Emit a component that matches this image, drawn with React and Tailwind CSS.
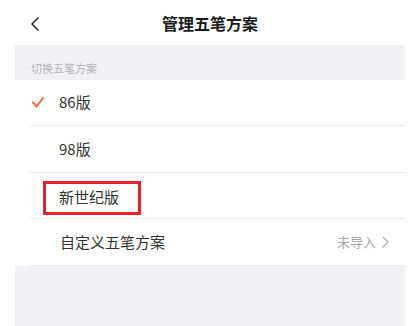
const font = { fontFamily: '"Noto Sans CJK SC", "Noto Sans", sans-serif' }

function Check () {
  return (
    <svg width="12" height="11" viewBox="0 0 12 11" fill="none" className="shrink-0">
      <path d="M1 5.5 L4.5 9.5 L11 1" stroke="#f2683c" strokeWidth="2" strokeLinecap="round" strokeLinejoin="round" />
    </svg>
  )
}

function Back () {
  return (
    <svg width="9" height="14" viewBox="0 0 9 14" fill="none">
      <path d="M8 1 L2 7 L8 13" stroke="#222" strokeWidth="1.5" strokeLinecap="round" strokeLinejoin="round" />
    </svg>
  )
}

function Chevron () {
  return (
    <svg width="7" height="12" viewBox="0 0 7 12" fill="none">
      <path d="M1 1 L6 6 L1 11" stroke="#b0b0b0" strokeWidth="1.2" strokeLinecap="round" strokeLinejoin="round" />
    </svg>
  )
}

export default function App () {
  return (
    <div className="w-[420px] h-[326px] bg-white overflow-hidden" style={font}>
      <div className="mx-[15px] flex flex-col h-full">
        {/* header */}
        <div className="relative h-[45px] flex items-center justify-center shrink-0">
          <div className="absolute left-[15px] top-[17px]"><Back /></div>
          <span className="text-[16px] font-bold text-[#1a1a1a]">管理五笔方案</span>
        </div>

        {/* section label */}
        <div className="h-[35px] bg-[#f1f1f5] flex items-end pb-[6px] pl-[16px] shrink-0">
          <span className="text-[11px] text-[#b3b3b8] leading-none">切换五笔方案</span>
        </div>

        {/* list */}
        <div className="bg-white pl-[15px] shrink-0">
          <div className="h-[46px] border-b border-[#ececec] flex items-center">
            <span className="ml-[2px] flex"><Check /></span>
            <span className="ml-[15px] text-[15px] text-[#333]">86版</span>
          </div>
          <div className="h-[47px] border-b border-[#ececec] flex items-center">
            <span className="ml-[29px] text-[15px] text-[#333]">98版</span>
          </div>
          <div className="h-[46px] border-b border-[#ececec] flex items-center">
            <span className="ml-[13px] mt-[4px] h-[34px] w-[98px] border-[3px] border-[#e8212b] flex items-center pl-[13px]">
              <span className="text-[15px] text-[#333]">新世纪版</span>
            </span>
          </div>
          <div className="h-[47px] border-b border-[#ececec] flex items-center pr-[16px]">
            <span className="ml-[30px] text-[15px] text-[#333]">自定义五笔方案</span>
            <span className="ml-auto text-[13px] text-[#a6a6a6]">未导入</span>
            <span className="ml-[6px]"><Chevron /></span>
          </div>
        </div>

        <div className="flex-1 bg-[#f1f1f5]" />
      </div>
    </div>
  )
}
